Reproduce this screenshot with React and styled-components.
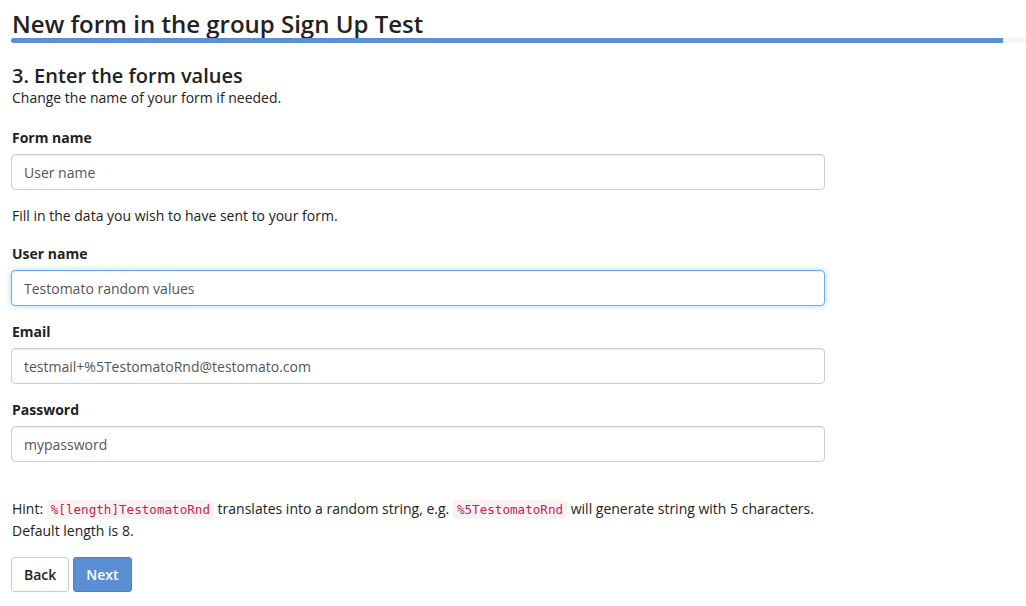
import React from 'react';
import styled, { createGlobalStyle } from 'styled-components';

const GlobalStyle = createGlobalStyle`
  html, body {
    margin: 0;
    padding: 0;
    background: #fff;
  }
  body {
    font-family: "Open Sans", "Liberation Sans", Arial, sans-serif;
    font-size: 14px;
    line-height: 20px;
    color: #333;
    overflow: hidden;
  }
`;

const fields = [
  { label: 'User name', value: 'Testomato random values', focused: true },
  { label: 'Email', value: 'testmail+%5TestomatoRnd@testomato.com' },
  { label: 'Password', value: 'mypassword' },
];

const App = () => {
  const progress = 97.7;

  return (
    <>
      <GlobalStyle />
      <Page>
        <Header>
          <Title>New form in the group Sign Up Test</Title>
          <Progress>
            <ProgressFill style={{ width: `${progress}%` }} />
          </Progress>
        </Header>

        <Content>
          <StepTitle>3. Enter the form values</StepTitle>
          <Lead>Change the name of your form if needed.</Lead>

          <FormGroup first>
            <Label>Form name</Label>
            <Input defaultValue="User name" />
          </FormGroup>

          <Lead spaced>Fill in the data you wish to have sent to your form.</Lead>

          {fields.map((f) => (
            <FormGroup key={f.label}>
              <Label>{f.label}</Label>
              <Input defaultValue={f.value} focused={f.focused} />
            </FormGroup>
          ))}

          <Hint>
            Hint: <Code>%[length]TestomatoRnd</Code> translates into a random string, e.g.{' '}
            <Code>%5TestomatoRnd</Code> will generate string with 5 characters.
            <br />
            Default length is 8.
          </Hint>

          <Actions>
            <Button>Back</Button>
            <Button primary>Next</Button>
          </Actions>
        </Content>
      </Page>
    </>
  );
};

const Page = styled.div`
  padding-left: 11px;
`;

const Header = styled.header`
  display: flex;
  flex-direction: column;
`;

const Title = styled.h1`
  margin: 0;
  padding: 10px 0 0 1px;
  font-size: 24px;
  line-height: 28px;
  font-weight: 600;
  color: #222;
`;

const Progress = styled.div`
  height: 5px;
  background: #f5f5f5;
  border-radius: 3px 0 0 3px;
  overflow: hidden;
`;

const ProgressFill = styled.div`
  height: 100%;
  background: #5b8fd4;
`;

const Content = styled.div`
  width: 814px;
  padding-top: 21px;
`;

const StepTitle = styled.h3`
  margin: 0;
  padding-left: 1px;
  font-size: 20px;
  line-height: 24px;
  font-weight: 600;
  color: #222;
`;

const Lead = styled.p`
  margin: ${({ spaced }) => (spaced ? '15px 0 18px' : '0')};
  padding-left: 1px;
  color: #222;
`;

const FormGroup = styled.div`
  display: flex;
  flex-direction: column;
  margin-top: ${({ first }) => (first ? '20px' : '0')};
  margin-bottom: 16px;
  &:last-of-type {
    margin-bottom: 0;
  }
`;

const Label = styled.label`
  font-weight: 700;
  color: #222;
  margin-bottom: 6px;
  padding-left: 1px;
`;

const Input = styled.input`
  box-sizing: border-box;
  width: 100%;
  height: 36px;
  padding: 0 12px;
  font-family: inherit;
  font-size: 14px;
  color: #555;
  background: #fff;
  border: 1px solid ${({ focused }) => (focused ? '#66afe9' : '#ccc')};
  border-radius: 4px;
  box-shadow: ${({ focused }) =>
    focused
      ? 'inset 0 1px 1px rgba(0,0,0,.075), 0 0 6px rgba(102,175,233,.5)'
      : 'inset 0 1px 1px rgba(0,0,0,.075)'};
  outline: none;
`;

const Hint = styled.p`
  margin: 36px 0 0;
  padding-left: 1px;
  line-height: 21px;
  color: #222;
`;

const Code = styled.code`
  font-family: "DejaVu Sans Mono", "Liberation Mono", monospace;
  font-size: 12.6px;
  padding: 2px 4px;
  color: #c7254e;
  background: #f9f2f4;
  border-radius: 4px;
`;

const Actions = styled.div`
  display: flex;
  gap: 4px;
  margin-top: 16px;
`;

const Button = styled.button`
  box-sizing: border-box;
  height: 35px;
  padding: 0 12px;
  font-family: inherit;
  font-size: 14px;
  font-weight: 600;
  border-radius: 3px;
  border: 1px solid ${({ primary }) => (primary ? '#4f83c8' : '#ccc')};
  background: ${({ primary }) => (primary ? '#5b8fd4' : '#fff')};
  color: ${({ primary }) => (primary ? '#fff' : '#222')};
  cursor: pointer;
`;

export default App;
